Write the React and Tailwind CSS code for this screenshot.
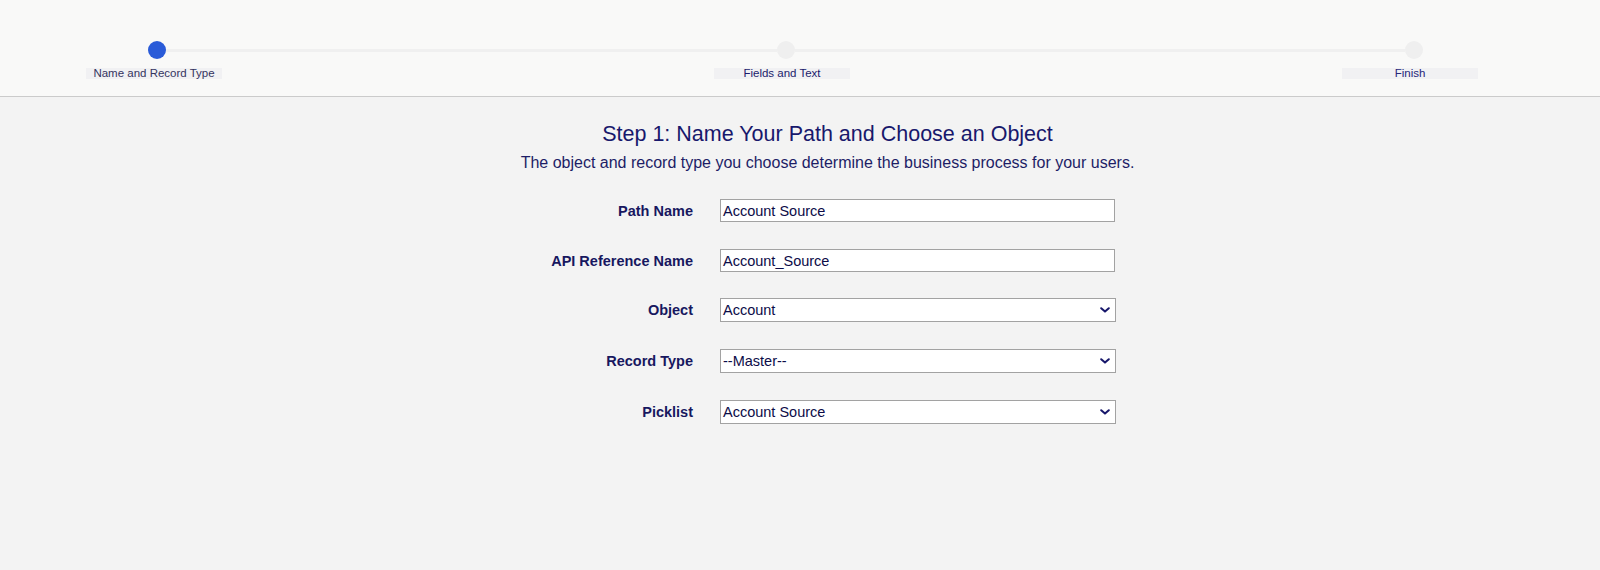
import React from "react";

function Chevron() {
  return (
    <svg width="10" height="6" viewBox="0 0 10 6" className="shrink-0">
      <path d="M1.2 1.2 L5 4.6 L8.8 1.2" fill="none" stroke="#16166a" strokeWidth="2" strokeLinecap="round" strokeLinejoin="round" />
    </svg>
  );
}

function TextRow({ label, value, className }) {
  return (
    <div className={"flex items-center gap-[27px] " + className}>
      <div className="w-[200px] text-right font-bold text-[14.5px] leading-[18px] text-[#17175f]">{label}</div>
      <div className="w-[395px] h-[23px] bg-white border border-[#a2a2a2] flex items-center pl-[2px] text-[14.5px] leading-[18px] text-[#0c0c48]">
        {value}
      </div>
    </div>
  );
}

function SelectRow({ label, value, className }) {
  return (
    <div className={"flex items-center gap-[27px] " + className}>
      <div className="w-[200px] text-right font-bold text-[14.5px] leading-[18px] text-[#17175f]">{label}</div>
      <div className="w-[396px] h-[24px] bg-white border border-[#a2a2a2] flex items-center justify-between pl-[2px] pr-[5px] text-[14.5px] leading-[18px] text-[#0c0c48]">
        <span>{value}</span>
        <Chevron />
      </div>
    </div>
  );
}

export default function App() {
  return (
    <div className="w-full min-h-[570px] bg-[#f3f3f3] flex flex-col" style={{ fontFamily: '"Liberation Sans", Arial, sans-serif' }}>
      <header className="h-[97px] bg-[#f9f9f8] border-b border-[#cbcbcb]">
        <div className="flex items-center pt-[41px] pl-[148px] pr-[177px]">
          <div className="w-[18px] h-[18px] rounded-full bg-[#2a5bd8] shrink-0" />
          <div className="flex-1 h-[3px] bg-[#f0f0f0]" />
          <div className="w-[18px] h-[18px] rounded-full bg-[#efefef] shrink-0" />
          <div className="flex-1 h-[3px] bg-[#f0f0f0]" />
          <div className="w-[18px] h-[18px] rounded-full bg-[#efefef] shrink-0" />
        </div>
        <div className="flex justify-between mt-[9px] pl-[86px] pr-[122px]">
          <div className="w-[136px] h-[11px] bg-[#f1f1f3] text-center text-[11.5px] leading-[11px] text-[#34345f]">Name and Record Type</div>
          <div className="w-[136px] h-[11px] bg-[#f1f1f3] text-center text-[11.5px] leading-[11px] text-[#1b1b6c]">Fields and Text</div>
          <div className="w-[136px] h-[11px] bg-[#f1f1f3] text-center text-[11.5px] leading-[11px] text-[#26267a]">Finish</div>
        </div>
      </header>
      <main className="flex-1 pl-[55px]">
        <h1 className="mt-[24px] text-center text-[21.5px] leading-[26px] text-[#18186c]">Step 1: Name Your Path and Choose an Object</h1>
        <p className="mt-[6px] text-center text-[16px] leading-[20px] text-[#1d1d66]">
          The object and record type you choose determine the business process for your users.
        </p>
        <div className="pl-[438px] mt-[26px] flex flex-col">
          <TextRow label="Path Name" value="Account Source" className="" />
          <TextRow label="API Reference Name" value="Account_Source" className="mt-[27px]" />
          <SelectRow label="Object" value="Account" className="mt-[26px]" />
          <SelectRow label="Record Type" value="--Master--" className="mt-[27px]" />
          <SelectRow label="Picklist" value="Account Source" className="mt-[27px]" />
        </div>
      </main>
    </div>
  );
}
